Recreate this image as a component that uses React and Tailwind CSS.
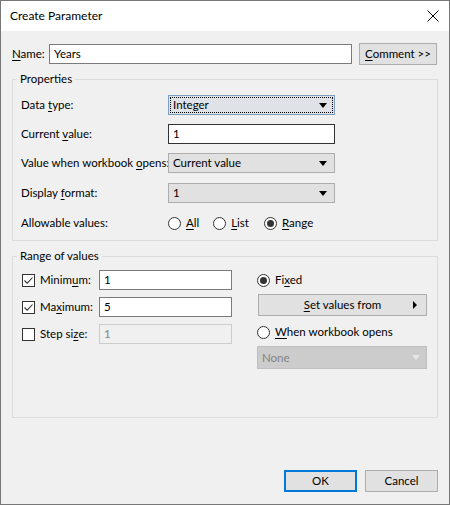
import React from 'react'

const font = "font-['Lato','Segoe_UI',sans-serif]"

function U({ children }) {
  return <span className="underline underline-offset-2">{children}</span>
}

function Arrow({ disabled }) {
  return (
    <svg width="8" height="5" viewBox="0 0 8 5" className="shrink-0">
      <path d="M0 0H8L4 5Z" fill={disabled ? '#e6e6e6' : '#000'} />
    </svg>
  )
}

function Select({ value, focus, disabled, className = '' }) {
  if (disabled) {
    return (
      <div className={`h-[23px] flex items-center justify-between pl-[4px] pr-[6px] bg-[#cccccc] border border-[#bfbfbf] text-[#838383] ${className}`}>
        <span>{value}</span>
        <Arrow disabled />
      </div>
    )
  }
  return (
    <div className={`h-[20px] flex p-[1px] border ${focus ? 'bg-[#dfe3e8] border-[#7c9ebf]' : 'bg-[#e1e1e1] border-[#adadad]'} ${className}`}>
      <div className={`flex-1 flex items-center justify-between pl-[2px] pr-[5px] border ${focus ? 'border-dotted border-black' : 'border-transparent'}`}>
        <span>{value}</span>
        <Arrow />
      </div>
    </div>
  )
}

function Input({ value, dark, disabled, className = '' }) {
  return (
    <div className={`h-[20px] flex items-center pl-[4px] border ${disabled ? 'bg-[#f0f0f0] border-[#cccccc] text-[#838383]' : 'bg-white text-black'} ${dark ? 'border-[#333333]' : disabled ? '' : 'border-[#7a7a7a]'} ${className}`}>
      {value}
    </div>
  )
}

function Radio({ checked }) {
  return (
    <div className="w-[13px] h-[13px] rounded-full border border-[#333333] bg-white flex items-center justify-center shrink-0">
      {checked && <div className="w-[7px] h-[7px] rounded-full bg-[#333333]" />}
    </div>
  )
}

function Check({ checked }) {
  return (
    <div className="w-[13px] h-[13px] border border-[#333333] bg-white flex items-center justify-center shrink-0">
      {checked && (
        <svg width="11" height="11" viewBox="0 0 11 11">
          <path d="M1.5 5.5L4.2 8.2L9.5 2.5" fill="none" stroke="#333" strokeWidth="1.1" />
        </svg>
      )}
    </div>
  )
}

function Button({ children, primary, className = '' }) {
  return (
    <div className={`h-[22px] flex items-center justify-center bg-[#e1e1e1] ${primary ? 'border-2 border-[#0078d7]' : 'border border-[#adadad]'} ${className}`}>
      {children}
    </div>
  )
}

function Row({ label, children }) {
  return (
    <div className="flex items-center">
      <div className="w-[147px] whitespace-nowrap">{label}</div>
      {children}
    </div>
  )
}

export default function App() {
  return (
    <div className={`w-[450px] h-[505px] border border-[#777777] bg-[#f0f0f0] flex flex-col text-[11.5px] leading-[16px] text-black whitespace-nowrap ${font}`}>
      <div className="h-[30px] bg-white flex items-center justify-between pl-[9px] pr-[10px]">
        <span className="text-[12px]">Create Parameter</span>
        <svg width="12" height="12" viewBox="0 0 12 12">
          <path d="M0.5 0.5L11.5 11.5M11.5 0.5L0.5 11.5" stroke="#000" strokeWidth="1" />
        </svg>
      </div>

      <div className="flex-1 flex flex-col px-[11px]">
        <div className="flex items-center mt-[12px] h-[21px]">
          <span className="w-[37px]"><U>N</U>ame:</span>
          <Input value="Years" className="w-[303px] h-[20px]" />
          <Button className="ml-[7px] w-[78px] h-[21px]"><span><U>C</U>omment &gt;&gt;</span></Button>
        </div>

        <fieldset className="mt-[7px] border border-[#dcdcdc] px-[4px] pb-[10px] h-[170px]">
          <legend className="px-[3px]">Properties</legend>
          <div className="flex flex-col gap-[9px] pl-[4px] mt-[8px]">
            <Row label={<span>Data <U>t</U>ype:</span>}>
              <Select value="Integer" focus className="w-[167px]" />
            </Row>
            <Row label={<span>Current <U>v</U>alue:</span>}>
              <Input value="1" dark className="w-[167px]" />
            </Row>
            <Row label={<span>Value when workbook <U>o</U>pens:</span>}>
              <Select value="Current value" className="w-[167px]" />
            </Row>
            <Row label={<span>Display <U>f</U>ormat:</span>}>
              <Select value="1" className="w-[167px] mt-[1px]" />
            </Row>
            <Row label="Allowable values:">
              <div className="flex items-center h-[20px] mt-[1px]">
                <Radio />
                <span className="ml-[5px]"><U>A</U>ll</span>
                <div className="ml-[14px]"><Radio /></div>
                <span className="ml-[5px]"><U>L</U>ist</span>
                <div className="ml-[15px]"><Radio checked /></div>
                <span className="ml-[5px]"><U>R</U>ange</span>
              </div>
            </Row>
          </div>
        </fieldset>

        <fieldset className="mt-[7px] border border-[#dcdcdc] px-[4px] h-[170px]">
          <legend className="px-[3px]">Range of values</legend>
          <div className="flex mt-[6px] pl-[5px]">
            <div className="flex flex-col gap-[7px] w-[235px]">
              <div className="flex items-center">
                <Check checked />
                <span className="ml-[5px] w-[59px]">Minim<U>u</U>m:</span>
                <Input value="1" className="w-[133px]" />
              </div>
              <div className="flex items-center">
                <Check checked />
                <span className="ml-[5px] w-[59px]">Ma<U>x</U>imum:</span>
                <Input value="5" className="w-[133px]" />
              </div>
              <div className="flex items-center">
                <Check />
                <span className="ml-[5px] w-[59px]">Step si<U>z</U>e:</span>
                <Input value="1" disabled className="w-[133px]" />
              </div>
            </div>
            <div className="flex flex-col w-[170px]">
              <div className="flex items-center h-[18px] mt-[1px]">
                <Radio checked />
                <span className="ml-[5px]">Fi<U>x</U>ed</span>
              </div>
              <Button className="mt-[5px] w-[169px] h-[22px] ml-[1px] relative">
                <span><U>S</U>et values from</span>
                <svg width="4" height="8" viewBox="0 0 4 8" className="absolute right-[9px] top-[6px]">
                  <path d="M0 0L4 4L0 8Z" fill="#000" />
                </svg>
              </Button>
              <div className="flex items-center h-[18px] mt-[7px]">
                <Radio />
                <span className="ml-[5px]"><U>W</U>hen workbook opens</span>
              </div>
              <Select value="None" disabled className="mt-[5px] w-[170px]" />
            </div>
          </div>
        </fieldset>

        <div className="flex justify-end mt-auto mb-[12px] gap-[8px]">
          <Button primary className="w-[73px]">OK</Button>
          <Button className="w-[73px]">Cancel</Button>
        </div>
      </div>
    </div>
  )
}
